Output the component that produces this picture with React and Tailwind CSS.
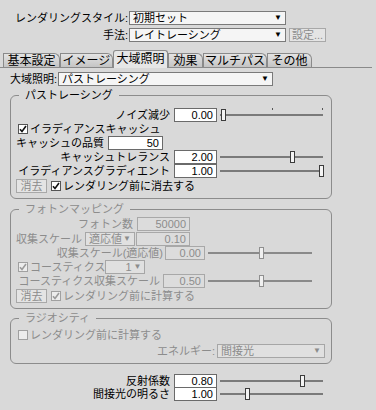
import React from 'react';

const Check = ({ checked, disabled }) => (
  <div
    className={`w-[10px] h-[10px] shrink-0 border flex items-center justify-center ${
      disabled ? 'border-[#a0a0a0] bg-[#ececec]' : 'border-[#555] bg-white'
    }`}
  >
    {checked && (
      <svg width="8" height="8" viewBox="0 0 8 8">
        <path
          d="M1 4.2 L3 6.5 L7 1"
          fill="none"
          stroke={disabled ? '#9a9a9a' : '#111'}
          strokeWidth="1.6"
        />
      </svg>
    )}
  </div>
);

const Select = ({ w, text, disabled, right }) => (
  <div
    className={`flex items-center h-[14px] border pl-[3px] pr-[3px] ${w} ${
      disabled ? 'border-[#a6a6a6] bg-[#e0e0e0] text-[#8c8c8c]' : 'border-[#7a7a7a] bg-[#f5f5f5] text-black'
    }`}
  >
    <span className={`flex-1 truncate ${right ? 'text-right pr-[2px]' : ''}`}>{text}</span>
    <span className="text-[8px] leading-[8px]">▼</span>
  </div>
);

const Field = ({ w, value, disabled }) => (
  <div
    className={`h-[14px] border text-right pr-[3px] leading-[12px] ${w} ${
      disabled ? 'border-[#a8a8a8] bg-[#dcdcdc] text-[#8c8c8c]' : 'border-[#6a6a6a] bg-white text-black'
    }`}
  >
    {value}
  </div>
);

const Slider = ({ w, pos, disabled, ticks }) => (
  <div className={`relative h-[14px] ${w}`}>
    {ticks &&
      ticks.map((t) => (
        <div key={t} className="absolute top-0 w-[1px] h-[2px] bg-[#555]" style={{ left: t }} />
      ))}
    <div className={`absolute left-0 right-0 top-[6px] h-[2px] ${disabled ? 'bg-[#8a8a8a]' : 'bg-[#7a7a7a]'}`} />
    <div
      className={`absolute top-[1px] h-[12px] w-[5px] border ${
        disabled ? 'border-[#8f8f8f] bg-[#f0f0f0]' : 'border-[#3c3c3c] bg-[#f4f4f4]'
      }`}
      style={{ left: pos }}
    />
  </div>
);

const Btn = ({ w, text }) => (
  <div className={`h-[14px] ${w} border border-[#a8a8a8] bg-[#e4e4e4] text-[#8c8c8c] leading-[12px] text-center`}>
    {text}
  </div>
);

const Group = ({ title, disabled, children, pb }) => (
  <fieldset className={`ml-[10px] w-[322px] border border-[#8c8c8c] rounded-[6px] ${pb}`}>
    <legend className={`ml-[8px] px-[6px] leading-[14px] ${disabled ? 'text-[#8c8c8c]' : 'text-black'}`}>
      {title}
    </legend>
    {children}
  </fieldset>
);

const tabs = [
  { label: '基本設定', w: 'w-[57px]' },
  { label: 'イメージ', w: 'w-[53px]' },
  { label: '大域照明', w: 'w-[55px]', active: true },
  { label: '効果', w: 'w-[35px]' },
  { label: 'マルチパス', w: 'w-[64px]' },
  { label: 'その他', w: 'w-[45px]' },
];

const App = () => {
  return (
    <div className="w-[376px] h-[410px] overflow-hidden bg-[#d9d9d9] text-black text-[11px] leading-[14px] font-['Liberation_Sans','Noto_Sans_CJK_JP',sans-serif]">
      {/* Rendering style */}
      <div className="pt-[11px]">
        <div className="flex items-center h-[14px]">
          <div className="w-[129px] text-right pr-[1px]">レンダリングスタイル:</div>
          <Select w="w-[157px]" text="初期セット" />
        </div>
        <div className="flex items-center h-[14px] mt-[3px]">
          <div className="w-[129px] text-right pr-[1px]">手法:</div>
          <Select w="w-[157px]" text="レイトレーシング" />
          <div className="ml-[3px]">
            <Btn w="w-[37px]" text="設定..." />
          </div>
        </div>
      </div>

      {/* Tabs */}
      <div className="mt-[9px] h-[17px] w-[372px] flex items-end pl-[3px] border-b border-[#8a8a8a]">
        {tabs.map((t) =>
          t.active ? (
            <div
              key={t.label}
              className={`${t.w} h-[18px] -mb-[1px] border border-b-0 border-[#8a8a8a] rounded-t-[3px] bg-[#e6e6e6] text-[12px] leading-[14px] text-center pt-[1px] relative z-10`}
            >
              {t.label}
            </div>
          ) : (
            <div
              key={t.label}
              className={`${t.w} h-[14px] border border-b-0 border-[#8a8a8a] rounded-tr-[6px] bg-gradient-to-b from-[#e4e4e4] to-[#c4c4c4] text-[12px] leading-[14px] text-center`}
            >
              {t.label}
            </div>
          )
        )}
      </div>

      {/* Global illumination select */}
      <div className="flex items-center h-[14px] mt-[4px]">
        <div className="w-[58px] text-right pr-[1px]">大域照明:</div>
        <Select w="w-[215px]" text="パストレーシング" />
      </div>

      {/* Path tracing */}
      <div className="mt-[2px]">
        <Group title="パストレーシング" pb="pb-[5px]">
          <div className="pt-[6px]">
            <div className="flex items-center h-[14px]">
              <div className="w-[163px] text-right pr-[4px]">ノイズ減少</div>
              <Field w="w-[43px]" value="0.00" />
              <div className="ml-[3px]">
                <Slider w="w-[103px]" pos={1} ticks={[52, 102]} />
              </div>
            </div>
            <div className="flex items-center h-[14px] pl-[7px]">
              <Check checked />
              <span className="ml-[2px]">イラディアンスキャッシュ</span>
            </div>
            <div className="flex items-center h-[14px] pl-[5px]">
              <span>キャッシュの品質</span>
              <div className="ml-[4px]">
                <Field w="w-[55px]" value="50" />
              </div>
            </div>
            <div className="flex items-center h-[14px]">
              <div className="w-[163px] text-right pr-[4px]">キャッシュトレランス</div>
              <Field w="w-[43px]" value="2.00" />
              <div className="ml-[3px]">
                <Slider w="w-[103px]" pos={70} />
              </div>
            </div>
            <div className="flex items-center h-[14px]">
              <div className="w-[163px] text-right pr-[4px]">イラディアンスグラディエント</div>
              <Field w="w-[43px]" value="1.00" />
              <div className="ml-[3px]">
                <Slider w="w-[103px]" pos={99} />
              </div>
            </div>
            <div className="flex items-center h-[15px] pl-[5px]">
              <Btn w="w-[31px]" text="消去" />
              <div className="ml-[4px]">
                <Check checked />
              </div>
              <span className="ml-[2px]">レンダリング前に消去する</span>
            </div>
          </div>
        </Group>
      </div>

      {/* Photon mapping */}
      <div className="mt-[3px]">
        <Group title="フォトンマッピング" disabled pb="pb-[5px]">
          <div className="pt-[1px] text-[#8c8c8c]">
            <div className="flex items-center h-[14px]">
              <div className="w-[126px] text-right pr-[4px]">フォトン数</div>
              <Field w="w-[53px]" value="50000" disabled />
            </div>
            <div className="flex items-center h-[15px] pl-[5px]">
              <span>収集スケール</span>
              <div className="ml-[3px]">
                <Select w="w-[50px]" text="適応値" disabled />
              </div>
              <div className="ml-[1px]">
                <Field w="w-[54px]" value="0.10" disabled />
              </div>
            </div>
            <div className="flex items-center h-[14px]">
              <div className="w-[154px] text-right pr-[2px]">収集スケール(適応値)</div>
              <Field w="w-[40px]" value="0.00" disabled />
              <div className="ml-[3px]">
                <Slider w="w-[104px]" pos={51} disabled />
              </div>
            </div>
            <div className="flex items-center h-[14px] pl-[7px]">
              <Check checked disabled />
              <span className="ml-[2px]">コースティクス</span>
              <Select w="w-[40px]" text="1" right disabled />
            </div>
            <div className="flex items-center h-[14px]">
              <div className="w-[152px] text-right pr-[3px]">コースティクス収集スケール</div>
              <Field w="w-[42px]" value="0.50" disabled />
              <div className="ml-[3px]">
                <Slider w="w-[104px]" pos={51} disabled />
              </div>
            </div>
            <div className="flex items-center h-[15px] pl-[5px]">
              <Btn w="w-[31px]" text="消去" />
              <div className="ml-[4px]">
                <Check checked disabled />
              </div>
              <span className="ml-[2px]">レンダリング前に計算する</span>
            </div>
          </div>
        </Group>
      </div>

      {/* Radiosity */}
      <div className="mt-[2px]">
        <Group title="ラジオシティ" disabled pb="pb-[5px]">
          <div className="pt-[3px] text-[#8c8c8c]">
            <div className="flex items-center h-[14px] pl-[7px]">
              <Check disabled />
              <span className="ml-[2px]">レンダリング前に計算する</span>
            </div>
            <div className="flex items-center h-[15px] mt-[1px]">
              <div className="w-[206px] text-right pr-[2px]">エネルギー:</div>
              <Select w="w-[108px]" text="間接光" disabled />
            </div>
          </div>
        </Group>
      </div>

      {/* Bottom sliders */}
      <div className="mt-[10px]">
        <div className="flex items-center h-[14px]">
          <div className="w-[174px] text-right pr-[4px]">反射係数</div>
          <Field w="w-[43px]" value="0.80" />
          <div className="ml-[3px]">
            <Slider w="w-[103px]" pos={80} />
          </div>
        </div>
        <div className="flex items-center h-[14px] mt-[-1px]">
          <div className="w-[174px] text-right pr-[4px]">間接光の明るさ</div>
          <Field w="w-[43px]" value="1.00" />
          <div className="ml-[3px]">
            <Slider w="w-[103px]" pos={25} />
          </div>
        </div>
      </div>
    </div>
  );
};

export default App;
